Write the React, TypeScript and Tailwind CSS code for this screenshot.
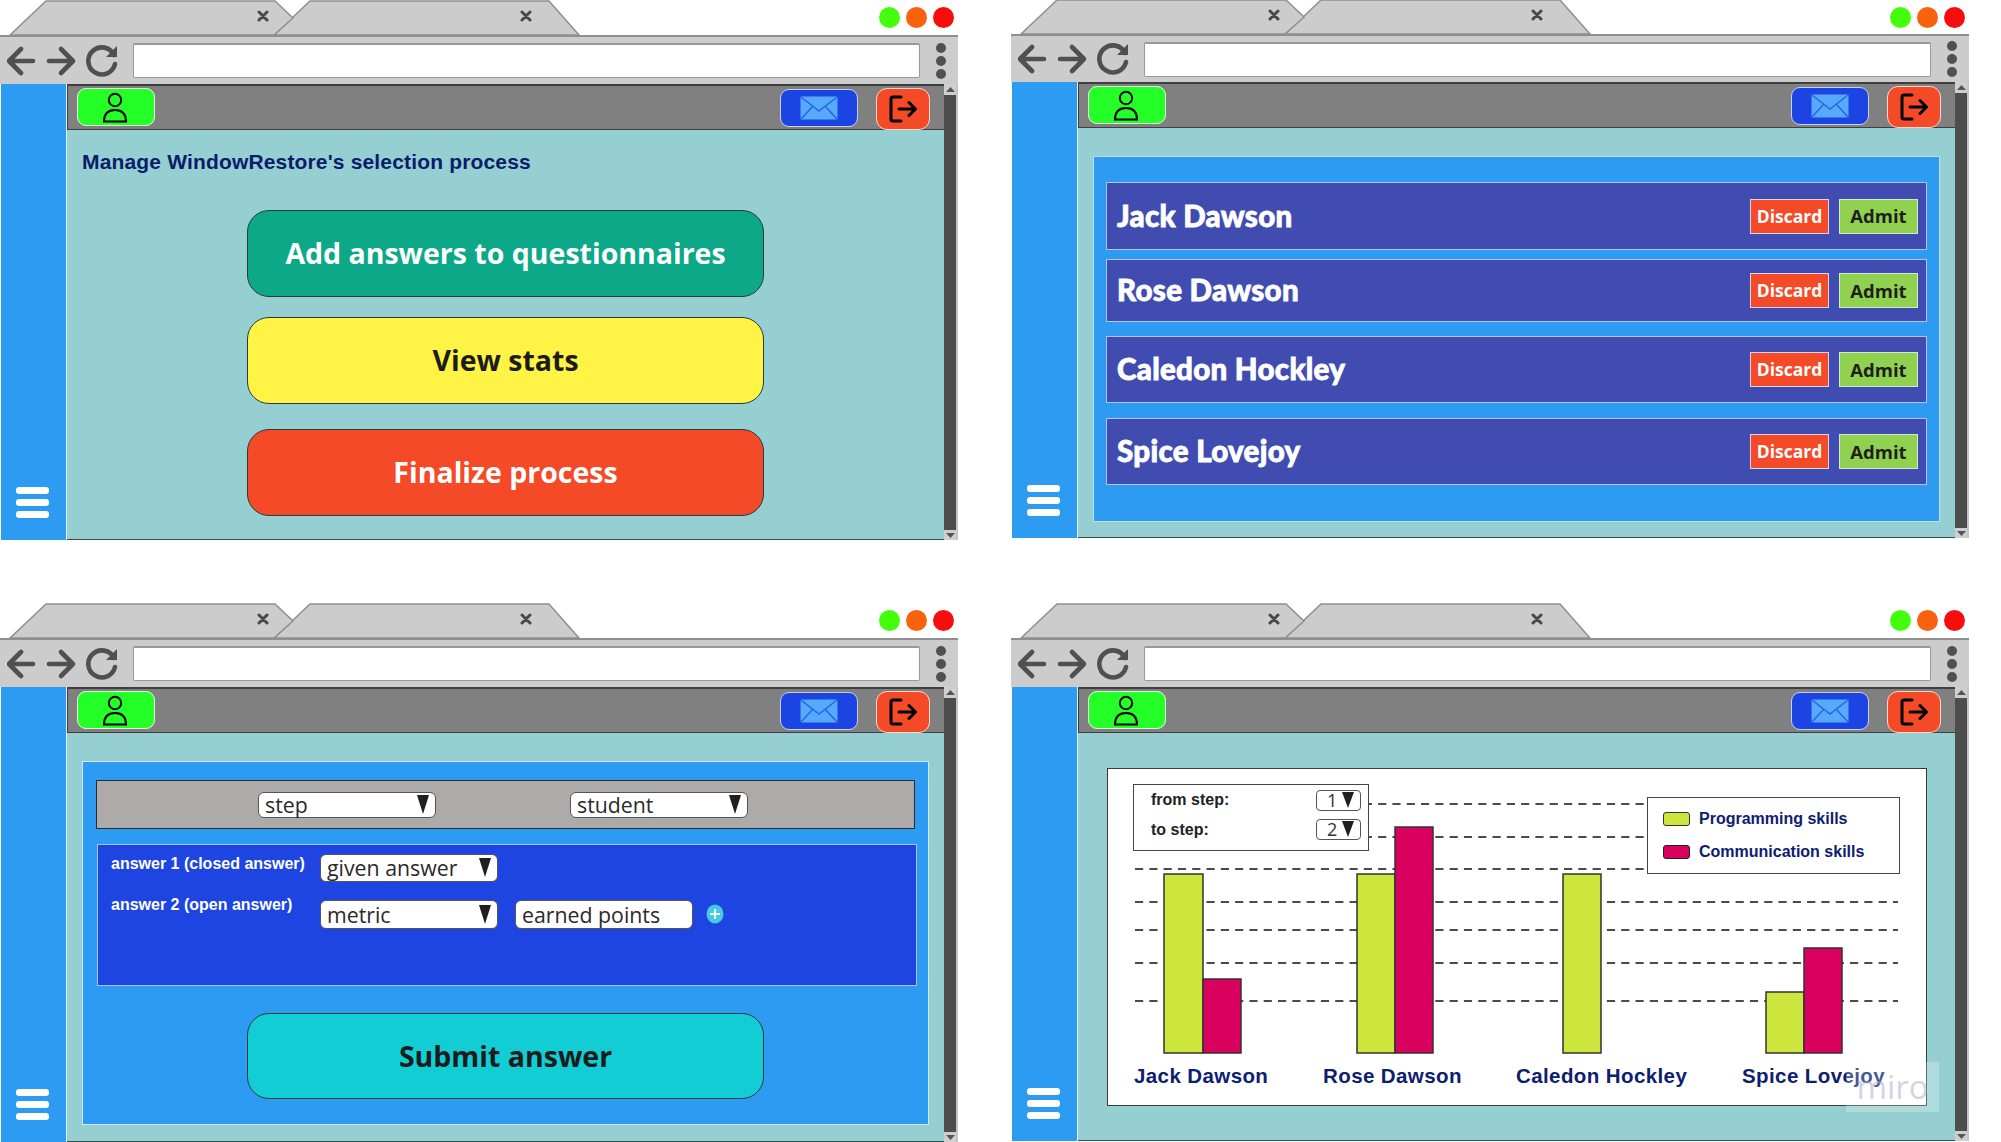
import React from "react";

const arial = "font-['Liberation_Sans',Arial,sans-serif]";
const open = "font-['Open_Sans','Noto_Sans',sans-serif]";

function TabStrip({ tabClass }: { tabClass: string }) {
  return (
    <div className={`relative flex justify-end items-start pr-[4px] ${tabClass}`}>
      <svg className="absolute left-0 bottom-0" width="600" height="36" viewBox="0 0 600 36">
        <polygon points="274,36 310,2 549,2 579,36" fill="#cccccc" stroke="#8f8f8f" strokeWidth="1.5" />
        <polygon points="10,36 46,2 275,2 293,19 274,36" fill="#cccccc" stroke="#8f8f8f" strokeWidth="1.5" />
        <path d="M259 13l8 8M267 13l-8 8M522 13l8 8M530 13l-8 8" stroke="#484848" strokeWidth="3" strokeLinecap="round" />
      </svg>
      <div className="flex gap-[6px] pt-[7px]">
        <span className="w-[21px] h-[21px] rounded-full bg-[#44ff0c]" />
        <span className="w-[21px] h-[21px] rounded-full bg-[#f9620f]" />
        <span className="w-[21px] h-[21px] rounded-full bg-[#f80d0d]" />
      </div>
    </div>
  );
}

function Toolbar({ h }: { h: string }) {
  return (
    <div className={`flex items-center bg-[#cccccc] border-t-[2px] border-[#8f8f8f] pl-[7px] pr-[2px] ${h}`}>
      <svg width="112" height="34" viewBox="0 0 112 34" fill="none" stroke="#505050" strokeWidth="4.6" strokeLinecap="round" strokeLinejoin="round" className="shrink-0">
        <path d="M2 17h24M14 5L2 17l12 12" />
        <path d="M42 17h24M54 5l12 12-12 12" />
        <path d="M107 11a13.5 13.5 0 1 0 1 9" />
        <polygon points="110,2 110,13 99,13" fill="#505050" stroke="none" />
      </svg>
      <div className="ml-[14px] flex-1 h-[35px] bg-white border border-[#999999] border-t-[2px] rounded-[2px]" />
      <div className="flex flex-col gap-[3px] ml-[16px] mr-[10px]">
        <span className="w-[10px] h-[10px] rounded-full bg-[#505050]" />
        <span className="w-[10px] h-[10px] rounded-full bg-[#505050]" />
        <span className="w-[10px] h-[10px] rounded-full bg-[#505050]" />
      </div>
    </div>
  );
}

function Header() {
  return (
    <div className="h-[46px] shrink-0 bg-[#808080] border-t-[2px] border-l-[1px] border-b-[1px] border-[#3f3f3f] flex items-start pl-[9px] pr-[14px]">
      <div className="mt-[2px] w-[78px] h-[38px] rounded-[9px] bg-[#23ff27] border border-[#e6ffe6] flex items-center justify-center">
        <svg width="26" height="31" viewBox="0 0 26 31" fill="none" stroke="#000" strokeWidth="2" className="-ml-[2px]">
          <circle cx="13" cy="8" r="6.2" />
          <path d="M2 29.5c0-8 4.5-11.5 11-11.5s11 3.500 11 11.500z" />
        </svg>
      </div>
      <div className="ml-auto mt-[3px] w-[78px] h-[38px] rounded-[9px] bg-[#1c44e3] border border-[#c6d0f5] flex items-center justify-center">
        <svg width="38" height="24" viewBox="0 0 38 24">
          <rect width="37" height="23" x="0.500" y="0.500" rx="1" fill="#56a9fb" />
          <path d="M1 1l18 14L37 1M1 23l12-13M37 23L25 10" fill="none" stroke="#2466e8" strokeWidth="1.500" />
        </svg>
      </div>
      <div className="ml-[18px] mt-[2px] w-[54px] h-[42px] rounded-[11px] bg-[#f44a27] border border-[#ffd8cc] flex items-center justify-center">
        <svg width="28" height="28" viewBox="0 0 28 28" fill="none" stroke="#000" strokeWidth="3" strokeLinecap="round" strokeLinejoin="round">
          <path d="M12 2H4a2 2 0 0 0-2 2v20a2 2 0 0 0 2 2h8" />
          <path d="M10 14h16M20 7.500l6.500 6.500-6.500 6.500" />
        </svg>
      </div>
    </div>
  );
}

function Scrollbar() {
  return (
    <div className="w-[14px] shrink-0 bg-[#c4c4c4] flex flex-col pr-[2px]">
      <div className="h-[11px] bg-[#cfcfcf] flex items-center justify-center">
        <svg width="9" height="5"><polygon points="0,5 9,5 4.500,0" fill="#555" /></svg>
      </div>
      <div className="flex-1 bg-[#4d4d4d]" />
      <div className="h-[10px] bg-[#cfcfcf] flex items-center justify-center">
        <svg width="9" height="5"><polygon points="0,0 9,0 4.500,5" fill="#555" /></svg>
      </div>
    </div>
  );
}

function Sidebar() {
  return (
    <div className="w-[66px] ml-[1px] shrink-0 bg-[#2e9bf2] border-r border-[#e4f2fb] flex flex-col justify-end items-center gap-[5px] pb-[22px] pr-[2px]">
      <span className="w-[33px] h-[7px] rounded-[3px] bg-white" />
      <span className="w-[33px] h-[7px] rounded-[3px] bg-white" />
      <span className="w-[33px] h-[7px] rounded-[3px] bg-white" />
    </div>
  );
}

function Browser({ tabClass, barClass, children, extra }: { tabClass: string; barClass: string; children: React.ReactNode; extra?: React.ReactNode }) {
  return (
    <div className="relative flex flex-col flex-1 min-h-0">
      <TabStrip tabClass={tabClass} />
      <Toolbar h={barClass} />
      <div className="flex flex-1 min-h-0">
        <Sidebar />
        <div className="flex-1 min-w-0 flex flex-col">
          <Header />
          <div className="flex-1 min-h-0 bg-[#95cfd1] border-b-[1px] border-[#33504f] flex flex-col">{children}</div>
        </div>
        <Scrollbar />
      </div>
      {extra}
    </div>
  );
}

function BigButton({ label, cls }: { label: string; cls: string }) {
  return (
    <div className={`w-[517px] mx-auto rounded-[22px] border border-[#2a3a3a] flex items-center justify-center font-bold text-[28.500px] ${open} ${cls}`}>
      {label}
    </div>
  );
}

function MainMenu() {
  return (
    <div className="flex flex-col">
      <div className={`pl-[15px] pt-[16px] h-[80px] text-[#0a1c6a] font-bold text-[21px] tracking-[0.16px] ${arial}`}>
        Manage WindowRestore's selection process
      </div>
      <BigButton label="Add answers to questionnaires" cls="h-[87px] bg-[#0ca888] text-white" />
      <BigButton label="View stats" cls="mt-[20px] h-[87px] bg-[#fff345] text-[#1c1c1c]" />
      <BigButton label="Finalize process" cls="mt-[25px] h-[87px] bg-[#f44a27] text-white" />
    </div>
  );
}

function Row({ name, cls }: { name: string; cls: string }) {
  return (
    <div className={`flex items-center bg-[#414cb0] border-[1.500px] border-[#b4c4ee] pl-[10px] pr-[8px] ${cls}`}>
      <span className="flex-1 font-['Lato','Open_Sans',sans-serif] font-black text-white text-[29.500px] tracking-[0.3px] [-webkit-text-stroke:0.800px_white]">{name}</span>
      <span className={`w-[79px] h-[35px] bg-[#f44a27] border-[1.500px] border-[#d5d8ee] text-white font-bold text-[17.500px] flex items-center justify-center ${open}`}>Discard</span>
      <span className={`ml-[10px] w-[79px] h-[35px] bg-[#90d24f] border-[1.500px] border-[#d5e8d0] text-[#1f1f1f] font-bold text-[18.500px] flex items-center justify-center ${open}`}>Admit</span>
    </div>
  );
}

function Admission() {
  return (
    <div className="mt-[28px] mx-[15px] h-[366px] bg-[#2e9bf2] border-[1.500px] border-[#b8e0f4] px-[12px] pt-[25px] flex flex-col">
      <Row name="Jack Dawson" cls="h-[68px]" />
      <Row name="Rose Dawson" cls="mt-[9px] h-[63px]" />
      <Row name="Caledon Hockley" cls="mt-[14px] h-[67px]" />
      <Row name="Spice Lovejoy" cls="mt-[15px] h-[67px]" />
    </div>
  );
}

function Select({ label, cls }: { label: string; cls: string }) {
  return (
    <div className={`w-[178px] bg-white border border-[#555] rounded-[6px] flex items-center justify-between pl-[6px] pr-[6px] text-[#2a2a2a] font-normal text-[21.300px] ${open} ${cls}`}>
      <span>{label}</span>
      <svg width="12" height="20" viewBox="0 0 12 20"><polygon points="0,0 12,0 6,19" fill="#1f1f1f" /></svg>
    </div>
  );
}

function AnswerForm() {
  return (
    <div className="mt-[28px] mx-[15px] h-[364px] bg-[#2e9bf2] border-[1.500px] border-[#cfe8f6] px-[13px] flex flex-col">
      <div className="mt-[18px] h-[49px] bg-[#aeaaa9] border border-[#2b2b2b] flex items-center pl-[161px] gap-[134px]">
        <Select label="step" cls="h-[26px]" />
        <Select label="student" cls="h-[26px]" />
      </div>
      <div className={`mt-[15px] ml-[1px] -mr-[2px] h-[142px] bg-[#1e44e2] border border-[#a7c3f1] pl-[13px] pt-[9px] text-white font-bold text-[16px] ${arial}`}>
        <div className="flex items-start h-[46px]">
          <span className="w-[209px] leading-[20px]">answer 1 (closed answer)</span>
          <Select label="given answer" cls="h-[28px]" />
        </div>
        <div className="flex items-start">
          <span className="w-[209px] leading-[20px] -mt-[5px]">answer 2 (open answer)</span>
          <Select label="metric" cls="h-[29px]" />
          <div className={`ml-[17px] w-[178px] h-[29px] bg-white border border-[#555] rounded-[6px] pl-[6px] flex items-center text-[#2a2a2a] font-normal text-[21.300px] ${open}`}>earned points</div>
          <svg className="ml-[13px] mt-[4px]" width="18" height="20" viewBox="0 0 18 20">
            <ellipse cx="9" cy="10" rx="8.500" ry="9.500" fill="#46c9e2" />
            <path d="M9 5v10M4 10h10" stroke="#fff" strokeWidth="1.800" />
          </svg>
        </div>
      </div>
      <BigButtonSubmit />
    </div>
  );
}

function BigButtonSubmit() {
  return (
    <div className={`mt-[27px] w-[517px] h-[86px] ml-[151px] rounded-[22px] border border-[#2a3a3a] bg-[#12cdd4] text-[#1c1c1c] flex items-center justify-center font-bold text-[28.500px] ${open}`}>
      Submit answer
    </div>
  );
}

const lines = [35, 68, 100, 133, 161, 194, 232];
const bars = [
  { x: 56, y: 105, w: 39, fill: "#cde63e" },
  { x: 95, y: 210, w: 38, fill: "#da0060" },
  { x: 249, y: 105, w: 38, fill: "#cde63e" },
  { x: 287, y: 58, w: 38, fill: "#da0060" },
  { x: 455, y: 105, w: 38, fill: "#cde63e" },
  { x: 658, y: 223, w: 38, fill: "#cde63e" },
  { x: 696, y: 179, w: 38, fill: "#da0060" },
];
const names = [
  { x: 26, t: "Jack Dawson" },
  { x: 215, t: "Rose Dawson" },
  { x: 408, t: "Caledon Hockley" },
  { x: 634, t: "Spice Lovejoy" },
];

function MiniSelect({ v }: { v: string }) {
  return (
    <div className={`w-[45px] h-[21px] border border-[#555] rounded-[4px] flex items-center justify-between pl-[10px] pr-[6px] text-[#333] font-normal text-[18px] ${open}`}>
      <span>{v}</span>
      <svg width="12" height="17" viewBox="0 0 12 17"><polygon points="0,0 12,0 6,16" fill="#1f1f1f" /></svg>
    </div>
  );
}

function Chart() {
  return (
    <div className="mt-[35px] ml-[29px] w-[820px] h-[338px] bg-white border-[1.500px] border-[#3a3a3a] relative">
      <svg width="817" height="335" viewBox="0 0 817 335" className="block">
        {lines.map((y) => (
          <line key={y} x1="27" x2="790" y1={y} y2={y} stroke="#111" strokeWidth="1.600" strokeDasharray="8.200 6.100" />
        ))}
        {bars.map((b, i) => (
          <rect key={i} x={b.x} y={b.y} width={b.w} height={284 - b.y} fill={b.fill} stroke="#333" strokeWidth="1.500" />
        ))}
        {names.map((n) => (
          <text key={n.t} x={n.x} y={314} fill="#0d2070" fontSize="20.500" fontWeight="700" letterSpacing="0.400" fontFamily="Liberation Sans, Arial, sans-serif">
            {n.t}
          </text>
        ))}
      </svg>
      <div className={`absolute left-[25px] top-[15px] w-[236px] h-[67px] bg-white border-[1.500px] border-[#444] pl-[17px] pr-[7px] pt-[4px] text-[#222] font-bold text-[16px] ${arial}`}>
        <div className="flex justify-between items-center h-[22px]"><span>from step:</span><MiniSelect v="1" /></div>
        <div className="mt-[7px] flex justify-between items-center h-[23px]"><span>to step:</span><MiniSelect v="2" /></div>
      </div>
      <div className={`absolute left-[539px] top-[28px] w-[253px] h-[77px] bg-white border-[1.500px] border-[#444] pl-[15px] pt-[13px] text-[#0d2070] font-bold text-[16px] ${arial}`}>
        <div className="flex items-center h-[16px] gap-[9px]">
          <span className="w-[27px] h-[14px] rounded-[3px] bg-[#cde63e] border-[1.500px] border-[#333]" />Programming skills
        </div>
        <div className="mt-[17px] flex items-center h-[16px] gap-[9px]">
          <span className="w-[27px] h-[14px] rounded-[3px] bg-[#da0060] border-[1.500px] border-[#222]" />Communication skills
        </div>
      </div>
    </div>
  );
}

export default function App() {
  return (
    <div className="w-[2001px] h-[1142px] overflow-hidden bg-white grid grid-cols-[958px_958px] grid-rows-[540px_539px] gap-x-[53px] gap-y-[63px]">
      <div className="flex flex-col">
        <Browser tabClass="h-[35px]" barClass="h-[49px]"><MainMenu /></Browser>
      </div>
      <div className="h-[538px] flex flex-col">
        <Browser tabClass="h-[34px]" barClass="h-[48px]"><Admission /></Browser>
      </div>
      <div className="flex flex-col">
        <Browser tabClass="h-[35px]" barClass="h-[49px]"><AnswerForm /></Browser>
      </div>
      <div className="h-[538px] flex flex-col">
        <Browser
          tabClass="h-[35px]"
          barClass="h-[49px]"
          extra={
            <div className={`absolute left-[835px] top-[459px] w-[93px] h-[50px] bg-white/25 flex items-center justify-center text-[33px] text-[#a8a8c8]/50 ${open}`}>
              miro
            </div>
          }
        >
          <Chart />
        </Browser>
      </div>
    </div>
  );
}
